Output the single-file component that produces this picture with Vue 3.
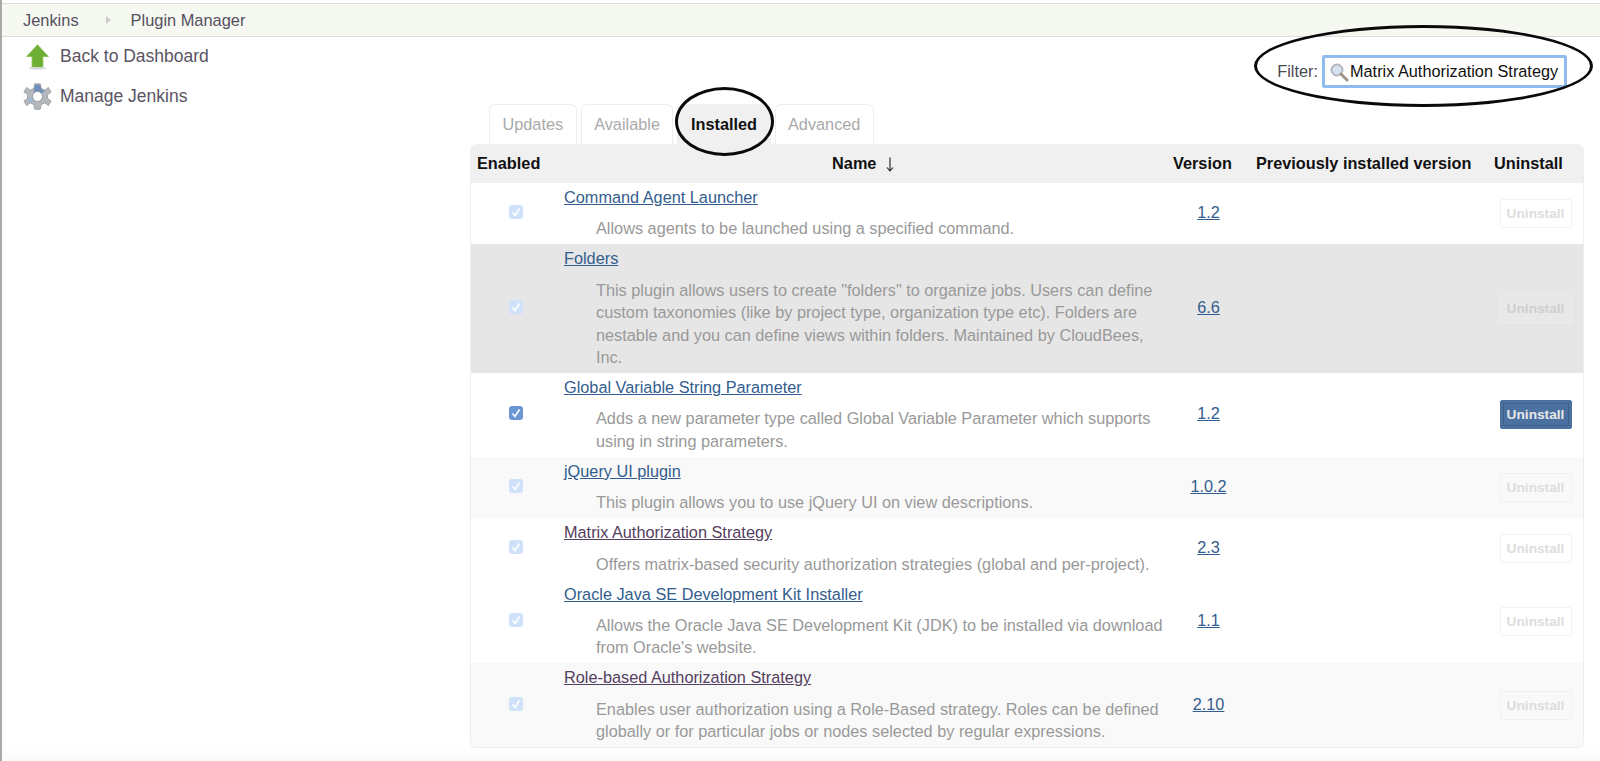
<script setup>
const plugins = [
  {
    name: 'Command Agent Launcher',
    lines: ['Allows agents to be launched using a specified command.'],
    version: '1.2',
    tone: 'plain',
    active: false
  },
  {
    name: 'Folders',
    lines: [
      'This plugin allows users to create "folders" to organize jobs. Users can define',
      'custom taxonomies (like by project type, organization type etc). Folders are',
      'nestable and you can define views within folders. Maintained by CloudBees,',
      'Inc.'
    ],
    version: '6.6',
    tone: 'dark',
    active: false
  },
  {
    name: 'Global Variable String Parameter',
    lines: [
      'Adds a new parameter type called Global Variable Parameter which supports',
      'using in string parameters.'
    ],
    version: '1.2',
    tone: 'plain',
    active: true
  },
  {
    name: 'jQuery UI plugin',
    lines: ['This plugin allows you to use jQuery UI on view descriptions.'],
    version: '1.0.2',
    tone: 'soft',
    active: false
  },
  {
    name: 'Matrix Authorization Strategy',
    lines: ['Offers matrix-based security authorization strategies (global and per-project).'],
    version: '2.3',
    tone: 'plain',
    active: false,
    visited: true
  },
  {
    name: 'Oracle Java SE Development Kit Installer',
    lines: [
      'Allows the Oracle Java SE Development Kit (JDK) to be installed via download',
      "from Oracle's website."
    ],
    version: '1.1',
    tone: 'plain',
    active: false
  },
  {
    name: 'Role-based Authorization Strategy',
    lines: [
      'Enables user authorization using a Role-Based strategy. Roles can be defined',
      'globally or for particular jobs or nodes selected by regular expressions.'
    ],
    version: '2.10',
    tone: 'soft',
    active: false,
    visited: true
  }
]
</script>

<template>
  <div class="page">
    <div class="edge-mark"></div>

    <div class="breadcrumbs">
      <a class="crumb">Jenkins</a>
      <span class="crumb-arrow"></span>
      <a class="crumb">Plugin Manager</a>
    </div>

    <div class="content">
      <aside class="sidebar">
        <a class="task">
          <svg class="task-icon" viewBox="0 0 32 32">
            <path d="M16 3 L28 16 L22 16 L22 28 L10 28 L10 16 L4 16 Z" fill="#6fae35" stroke="#8cc45a" stroke-width="1" />
            <ellipse cx="16" cy="29" rx="10" ry="1.5" fill="#d8d8d8" />
          </svg>
          Back to Dashboard
        </a>
        <a class="task">
          <svg class="task-icon" viewBox="0 0 32 32">
            <path
              d="M13 2 L19 2 L20 7 L24 9 L28 6 L31 11 L27 14 L27 18 L31 21 L28 26 L24 23 L20 25 L19 30 L13 30 L12 25 L8 23 L4 26 L1 21 L5 18 L5 14 L1 11 L4 6 L8 9 L12 7 Z"
              fill="#b4b8bd"
              stroke="#9a9ea4"
              stroke-width="1"
            />
            <path d="M13 3 L19 3 L20 8 L24 10 L20 13 L16 10 L12 12 Z" fill="#6d8fb8" />
            <path d="M5 19 L10 16 L12 20 L8 23 Z" fill="#9db4cc" />
            <circle cx="16" cy="16" r="5.5" fill="#fff" stroke="#8f9399" stroke-width="1" />
          </svg>
          Manage Jenkins
        </a>
      </aside>

      <main class="main">
        <div class="filter-row">
          <div class="filter">
            <span class="oval filter-oval"></span>
            <label class="filter-label">Filter:</label>
            <div class="filter-input">
              <svg class="search-icon" viewBox="0 0 20 20">
                <circle cx="8" cy="8" r="5.5" fill="#d5e3f1" stroke="#b3b7bb" stroke-width="2" />
                <path d="M12 12 L18 18" stroke="#a09486" stroke-width="3" stroke-linecap="round" />
              </svg>
              <span>Matrix Authorization Strategy</span>
            </div>
          </div>
        </div>

        <div class="tabs">
          <a class="tab">Updates</a>
          <a class="tab">Available</a>
          <a class="tab tab-active">
            Installed
            <span class="oval tab-oval"></span>
          </a>
          <a class="tab">Advanced</a>
        </div>

        <table class="plugins">
          <colgroup>
            <col class="col-enabled" />
            <col class="col-name" />
            <col class="col-version" />
            <col class="col-previous" />
            <col class="col-uninstall" />
          </colgroup>
          <thead>
            <tr>
              <th class="th-enabled">Enabled</th>
              <th class="th-name">
                Name
                <svg class="sort-arrow" viewBox="0 0 8 15">
                  <path d="M4 0.5 L4 14 M1 10.5 L4 14 L7 10.5" fill="none" stroke="#222" stroke-width="1.1" />
                </svg>
              </th>
              <th class="th-version">Version</th>
              <th class="th-previous">Previously installed version</th>
              <th class="th-uninstall">Uninstall</th>
            </tr>
          </thead>
          <tbody>
            <tr v-for="plugin in plugins" :key="plugin.name" :class="'tone-' + plugin.tone">
              <td class="cell-check">
                <span :class="['check', { 'check-on': plugin.active }]">
                  <svg viewBox="0 0 14 14">
                    <path d="M3.5 7.5 L6 10.5 L10.5 3.5" fill="none" stroke="#fff" stroke-width="1.6" />
                  </svg>
                </span>
              </td>
              <td class="cell-name">
                <a :class="['plugin-link', { visited: plugin.visited }]">{{ plugin.name }}</a>
                <div class="desc">
                  <div v-for="line in plugin.lines" :key="line">{{ line }}</div>
                </div>
              </td>
              <td class="cell-version"><a class="version-link">{{ plugin.version }}</a></td>
              <td></td>
              <td class="cell-action">
                <button :class="['uninstall', { 'uninstall-on': plugin.active }]">Uninstall</button>
              </td>
            </tr>
          </tbody>
        </table>
      </main>
    </div>
  </div>
</template>

<style scoped>
.page {
  position: relative;
  box-sizing: border-box;
  height: 761px;
  overflow: hidden;
  padding-top: 3px;
  border-left: 2px solid #aaa;
  background: linear-gradient(to bottom, #fff 745px, #fafafa 761px);
  font-family: "Liberation Sans", Arial, sans-serif;
  font-size: 16.3px;
  line-height: 22.4px;
  color: #333;
}

.edge-mark {
  position: absolute;
  left: -2px;
  top: 198px;
  width: 2px;
  height: 22px;
  background: #8a7a92;
}

.breadcrumbs {
  display: flex;
  align-items: center;
  box-sizing: border-box;
  height: 34px;
  padding-left: 21px;
  background: #f6f8f2;
  border-top: 1px solid #ddd;
  border-bottom: 1px solid #ddd;
}

.crumb {
  color: #55505e;
  font-size: 16.4px;
}

.crumb-arrow {
  width: 0;
  height: 0;
  margin: 0 20px 0 27px;
  border-left: 5px solid #ccc;
  border-top: 4px solid transparent;
  border-bottom: 4px solid transparent;
}

.content {
  display: flex;
}

.sidebar {
  display: flex;
  flex-direction: column;
  width: 468px;
  flex-shrink: 0;
  padding-top: 5px;
  gap: 12px;
}

.task {
  display: flex;
  align-items: center;
  gap: 8px;
  height: 28px;
  padding-left: 21px;
  color: #5a5464;
  font-size: 17.5px;
}

.task-icon {
  width: 29px;
  height: 29px;
  flex-shrink: 0;
}

.main {
  width: 1112px;
}

.filter-row {
  display: flex;
  justify-content: flex-end;
  height: 67px;
  padding-top: 18px;
  box-sizing: border-box;
}

.filter {
  position: relative;
  display: flex;
  align-items: center;
  gap: 4px;
  height: 33px;
  margin-right: 15px;
}

.filter-label {
  color: #4a4a52;
  font-size: 16.3px;
}

.filter-input {
  display: flex;
  align-items: center;
  gap: 1px;
  box-sizing: border-box;
  width: 245px;
  height: 33px;
  padding-left: 4px;
  border: 3px solid #8fbbee;
  border-radius: 2px;
  background: #fff;
  color: #111;
  font-size: 16.3px;
  white-space: nowrap;
}

.search-icon {
  width: 20px;
  height: 20px;
  flex-shrink: 0;
}

.oval {
  position: absolute;
  box-sizing: border-box;
  border: 3px solid #0a0a0a;
  border-radius: 50%;
  pointer-events: none;
}

.filter-oval {
  left: -23px;
  top: -30px;
  width: 339px;
  height: 82px;
}

.tabs {
  display: flex;
  gap: 4px;
  height: 40px;
  padding-left: 19px;
}

.tab {
  position: relative;
  box-sizing: border-box;
  height: 40px;
  padding: 8px 12.5px 0;
  border: 1px solid #eee;
  border-bottom: none;
  border-radius: 6px 6px 0 0;
  color: #aaa;
  font-size: 16.3px;
}

.tab-active {
  background: #f0f0f0;
  border-color: #f0f0f0;
  color: #111;
  font-weight: bold;
}

.tab-oval {
  left: -3px;
  top: -18px;
  width: 99px;
  height: 69px;
}

.plugins {
  table-layout: fixed;
  width: 1112px;
  border-collapse: separate;
  border-spacing: 0;
  border: 1px solid #eee;
  border-top: none;
  border-radius: 6px;
  font-size: 16.3px;
}

.col-enabled {
  width: 89px;
}

.col-name {
  width: 606px;
}

.col-version {
  width: 85px;
}

.col-previous {
  width: 239px;
}

.col-uninstall {
  width: 93px;
}

th {
  height: 39px;
  padding: 0;
  background: #f0f0f0;
  color: #111;
  font-size: 16.3px;
  font-weight: bold;
  text-align: left;
}

.th-enabled {
  padding-left: 6px;
  border-top-left-radius: 6px;
}

.th-name {
  text-align: center;
}

.th-version {
  padding-left: 7px;
}

.th-previous {
  padding-left: 5px;
}

.th-uninstall {
  padding-left: 4px;
  border-top-right-radius: 6px;
}

.sort-arrow {
  width: 8px;
  height: 15px;
  margin-left: 5px;
  vertical-align: -3px;
}

td {
  padding: 0;
  vertical-align: middle;
}

.tone-dark td {
  background: #e6e6e6;
}

.tone-soft td {
  background: #f9f9f9;
}

.tone-soft:last-child td:first-child {
  border-bottom-left-radius: 6px;
}

.tone-soft:last-child td:last-child {
  border-bottom-right-radius: 6px;
}

.cell-check {
  padding-bottom: 3px;
}

.check {
  display: block;
  box-sizing: border-box;
  width: 14px;
  height: 14px;
  margin: 0 auto;
  border-radius: 3px;
  background: #cfe2fa;
}

.check svg {
  display: block;
  width: 14px;
  height: 14px;
}

.check-on {
  background: #6b97d2;
}

.cell-name {
  padding: 3px 4px 4.6px;
}

.plugin-link,
.version-link {
  color: #335d8e;
  text-decoration: underline;
}

.plugin-link.visited {
  color: #54405f;
}

.desc {
  margin-top: 9px;
  padding-left: 32px;
  color: #999;
  white-space: nowrap;
}

.cell-version {
  padding-bottom: 3px;
  text-align: center;
}

.cell-action {
  padding-right: 2px;
  text-align: center;
}

.uninstall {
  box-sizing: border-box;
  width: 72px;
  height: 29px;
  padding: 0;
  border: 1px solid #f3f3f3;
  border-radius: 2px;
  background: #fff;
  color: #ddd;
  font-family: inherit;
  font-size: 13.7px;
  font-weight: bold;
}

.tone-soft .uninstall {
  background: #f9f9f9;
  border-color: #f0f0f0;
}

.tone-dark .uninstall {
  background: #e8e8e8;
  border-color: #ededed;
  color: #cfcfcf;
}

.uninstall-on {
  background: #4b71a0;
  border-color: #4b71a0;
  color: #e8e8e8;
  outline: 1px dotted #3a5270;
  outline-offset: -4px;
}
</style>
